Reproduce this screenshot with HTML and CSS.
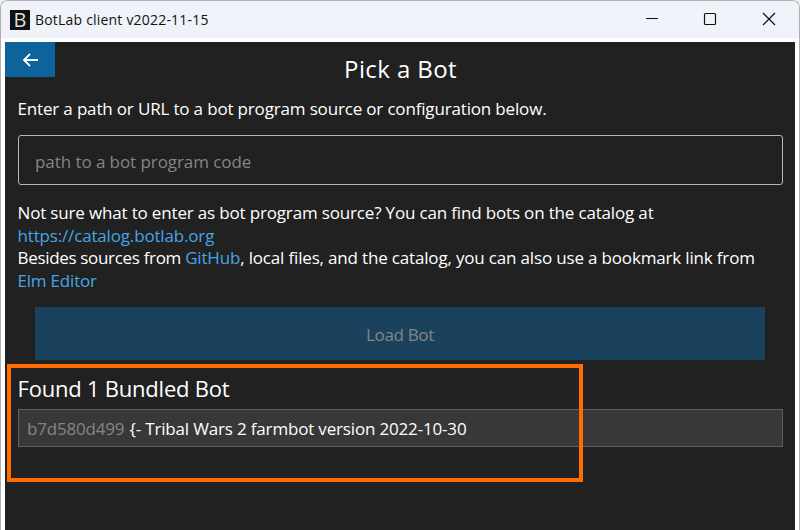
FILE: index.html
```
<!DOCTYPE html>
<html lang="en"><head><meta charset="utf-8"><title>BotLab client v2022-11-15</title><link rel="stylesheet" href="styles.css"></head>
<body>
<div class="window">
<header class="titlebar">
<span class="logo">B</span><span class="title">BotLab client v2022-11-15</span>
<svg class="controls" width="138" height="20" viewBox="0 0 138 20" fill="none" stroke="#111" stroke-width="1.2"><path d="M4 9.500h12"/><rect x="62.500" y="4.500" width="11" height="11" rx="1"/><path d="M121 4l12 12M133 4l-12 12"/></svg>
</header>
<main class="client">
<button class="back" aria-label="Back"><svg width="16" height="14" viewBox="0 0 16 14" fill="none" stroke="#fff" stroke-width="1.8"><path d="M16 7H2.500M8 1L2 7l6 6"/></svg></button>
<h1>Pick a Bot</h1>
<p class="intro">Enter a path or URL to a bot program source or configuration below.</p>
<div class="field">path to a bot program code</div>
<div class="help">
<p>Not sure what to enter as bot program source? You can find bots on the catalog at</p>
<p><a>https://catalog.botlab.org</a></p>
<p class="sources"><span class="lead">Besides sources from </span><a>GitHub</a>, local files, and the catalog, you can also use a bookmark link from</p>
<p class="editor"><a>Elm Editor</a></p>
</div>
<button class="load">Load Bot</button>
<h2>Found 1 Bundled Bot</h2>
<div class="bot"><span class="hash">b7d580d499</span> <span class="name">{- Tribal Wars 2 farmbot version 2022-10-30</span></div>
</main>
<div class="highlight"></div>
</div>
</body></html>
```
FILE: styles.css
```
*{box-sizing:border-box;margin:0;padding:0}
body{width:800px;height:530px;overflow:hidden;background:#f0f0f0;font-family:"Open Sans","Noto Sans",sans-serif}
.window{position:relative;height:530px;background:#fff;display:flex;flex-direction:column;border:1px solid #b0b0b0;border-bottom:0;border-radius:8px 8px 0 0;overflow:hidden}
.titlebar{height:37px;display:flex;align-items:center;padding:0 19px 0 9px;background:#eff3f9}
.logo{width:20px;height:20px;background:#111;color:#ddd;font-size:20px;line-height:19px;text-align:center}
.title{font-size:14px;letter-spacing:.2px;margin-left:5px;flex:1;color:#111}
.controls{position:relative;top:-1px}
.client{flex:1;margin:4px 4px 0;background:#212121;color:#fff;padding:0 12px 0 13px;font-size:17px;letter-spacing:-.165px}
.back{display:flex;align-items:center;justify-content:center;width:50px;height:35px;margin-left:-13px;background:#0e639c;border:0}
h1{font-size:24px;font-weight:400;text-align:center;line-height:32px;margin-top:-24px;letter-spacing:.4px}
p{white-space:nowrap;line-height:22.7px;margin-left:-.5px}
.intro{margin-top:13px}
.field{height:50px;margin-top:14.300px;border:1px solid #bab9b0;border-radius:3px;padding-left:16px;line-height:51px;color:#858585;letter-spacing:-.07px}
.help{margin-top:17px}
.sources{letter-spacing:-.17px}
.lead{letter-spacing:-.32px}
.editor{letter-spacing:-.2px}
a{color:#45a6e5}
.load{display:block;width:730px;height:53px;margin:14.200px 17px 0;padding-top:1px;border:0;background:#1b425d;color:#858585;font:inherit;letter-spacing:-.35px}
h2{font-size:22px;font-weight:400;line-height:30px;margin-top:13px;margin-left:-.5px;letter-spacing:-.22px}
.bot{height:38px;margin-top:6px;border:1px solid #606060;background:#383838;padding-left:8px;line-height:37px;white-space:nowrap;letter-spacing:-.17px}
.hash{color:#858585;letter-spacing:-.2px}
.name{margin-left:1px}
.highlight{position:absolute;left:6px;top:363px;width:576px;height:118px;border:4px solid #ff6d00}
```
